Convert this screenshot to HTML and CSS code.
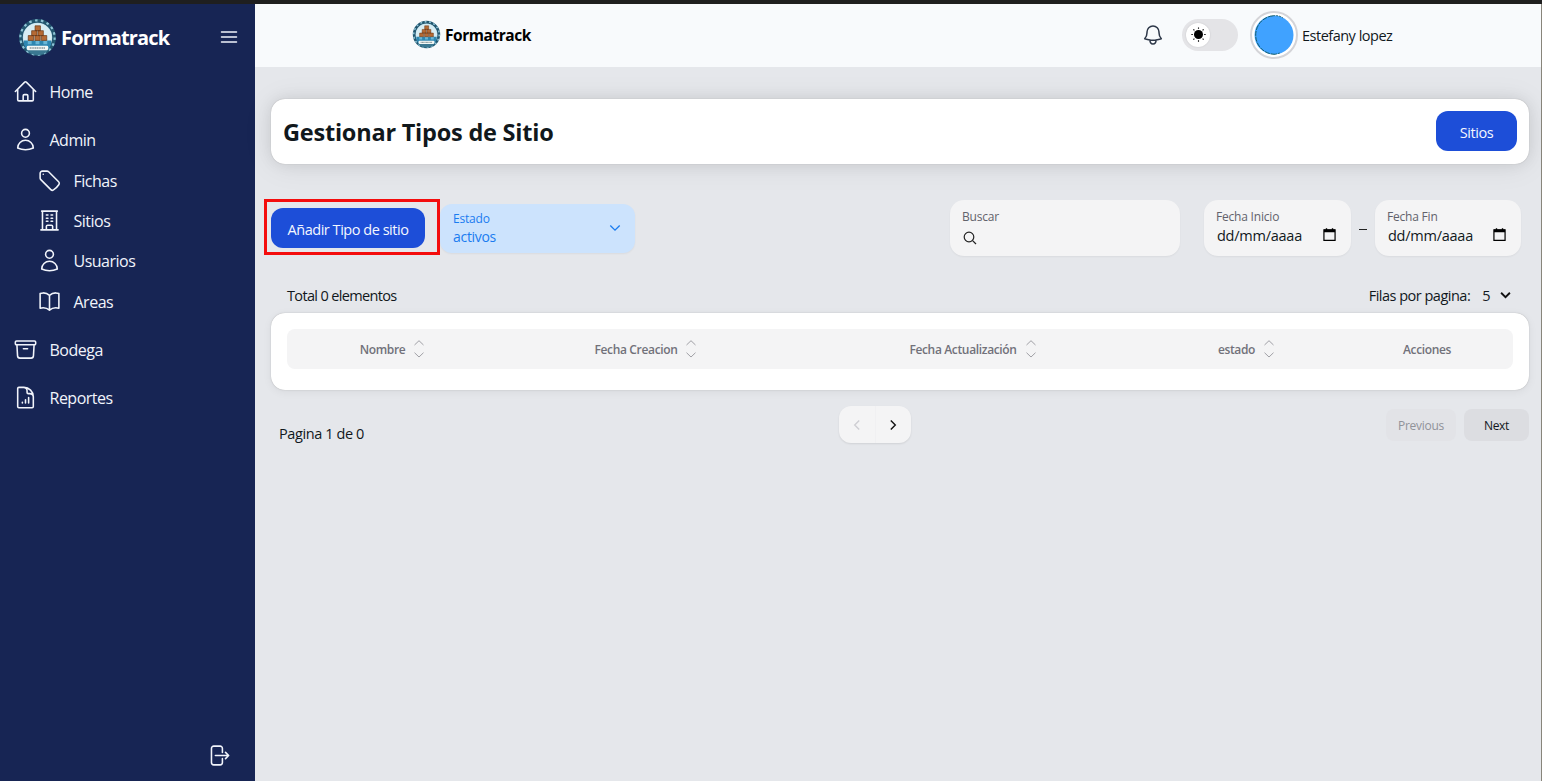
FILE: index.html
```html
<!DOCTYPE html>
<html lang="es">
<head>
<meta charset="utf-8">
<title>Formatrack</title>
<link rel="stylesheet" href="styles.css">
</head>
<body>
<svg class="defs" width="0" height="0">
  <symbol id="logo" viewBox="0 0 40 40">
    <circle cx="20" cy="20" r="18" fill="#b9dce9"/>
    <circle cx="20" cy="20" r="17" fill="none" stroke="#23566f" stroke-width="3.8"/>
    <circle cx="20" cy="20" r="17.600" fill="none" stroke="#8fc3d6" stroke-width="2.200" stroke-dasharray="2.600 3.540"/>
    <circle cx="20" cy="20" r="14.600" fill="#d8edf4"/>
    <path d="M6 23h28v4a14.600 14.600 0 0 1-28 0z" fill="#2d86b0"/>
    <path d="M10 22h4v5h-4zM18 22h4v5h-4zM26 22h4v5h-4z" fill="#69b6d6"/>
    <g fill="#b56a34" stroke="#693614" stroke-width=".7">
      <path d="M17.500 8h5.500v5h-5.500zM14 13h5.500v5H14zM20.500 13H26v5h-5.500zM10.500 18H16v5h-5.500zM17.300 18h5.500v5h-5.500zM24 18h5.500v5H24z"/>
    </g>
    <path d="M8 32a15 15 0 0 0 24 0z" fill="#3b7891"/>
    <rect x="9" y="28.500" width="22" height="4.500" rx="1.500" fill="#f3f8f6"/>
    <path d="M12 30.800h16" stroke="#53646a" stroke-width="1.100" stroke-dasharray="1.300 .5"/>
  </symbol>
  <symbol id="sort" viewBox="0 0 12 20">
    <path d="m1.500 6 4.500-4.300L10.500 6M1.500 13.700 6 18l4.500-4.300" fill="none" stroke="currentColor"/>
  </symbol>
  <symbol id="calendar" viewBox="0 0 14 14">
    <path d="M1 2h12v11.300H1z" fill="none" stroke="#000" stroke-width="1.300"/>
    <path d="M1 1.600h12v3H1zM3 .3h1.500v2H3zM9.500.3H11v2H9.500z"/>
  </symbol>
</svg>
<div class="window-edge"></div>
<div class="app">
  <aside class="sidebar">
    <div class="brand">
      <svg class="brand-logo"><use href="#logo"/></svg>
      <span class="brand-name">Formatrack</span>
      <svg class="menu" viewBox="0 0 24 24"><path d="M3.750 6.500h16.500M3.750 12h16.500m-16.500 5.500h16.500"/></svg>
    </div>
    <nav class="nav">
      <a class="item"><svg viewBox="0 0 24 24"><path d="m2.250 12 8.954-8.955c.44-.439 1.152-.439 1.591 0L21.750 12M4.500 9.750v10.125c0 .621.504 1.125 1.125 1.125H9.750v-4.875c0-.621.504-1.125 1.125-1.125h2.250c.621 0 1.125.504 1.125 1.125V21h4.125c.621 0 1.125-.504 1.125-1.125V9.750M8.250 21h8.250"/></svg><span>Home</span></a>
      <a class="item"><svg viewBox="0 0 24 24"><path d="M15.750 6a3.750 3.750 0 1 1-7.500 0 3.750 3.750 0 0 1 7.500 0ZM4.501 20.118a7.500 7.500 0 0 1 14.998 0A17.933 17.933 0 0 1 12 21.750c-2.676 0-5.216-.584-7.499-1.632Z"/></svg><span>Admin</span></a>
      <div class="subnav">
        <a class="item"><svg viewBox="0 0 24 24"><path d="M9.568 3H5.250A2.250 2.250 0 0 0 3 5.250v4.318c0 .597.237 1.170.659 1.591l9.581 9.581c.699.699 1.780.872 2.607.33a18.095 18.095 0 0 0 5.223-5.223c.542-.827.369-1.908-.33-2.607L11.160 3.660A2.250 2.250 0 0 0 9.568 3ZM6 6h.008v.008H6V6Z"/></svg><span>Fichas</span></a>
        <a class="item"><svg viewBox="0 0 24 24"><path d="M3.750 21h16.500M4.500 3h15M5.250 3v18m13.500-18v18M9 6.750h1.500m-1.500 3h1.500m-1.500 3h1.500m3-6H15m-1.500 3H15m-1.500 3H15M9 21v-3.375c0-.621.504-1.125 1.125-1.125h3.750c.621 0 1.125.504 1.125 1.125V21"/></svg><span>Sitios</span></a>
        <a class="item"><svg viewBox="0 0 24 24"><path d="M15.750 6a3.750 3.750 0 1 1-7.500 0 3.750 3.750 0 0 1 7.500 0ZM4.501 20.118a7.500 7.500 0 0 1 14.998 0A17.933 17.933 0 0 1 12 21.750c-2.676 0-5.216-.584-7.499-1.632Z"/></svg><span>Usuarios</span></a>
        <a class="item"><svg viewBox="0 0 24 24"><path d="M12 6.042A8.967 8.967 0 0 0 6 3.750c-1.052 0-2.062.18-3 .512v14.250A8.987 8.987 0 0 1 6 18c2.305 0 4.408.867 6 2.292m0-14.250a8.966 8.966 0 0 1 6-2.292c1.052 0 2.062.18 3 .512v14.250A8.987 8.987 0 0 0 18 18a8.967 8.967 0 0 0-6 2.292m0-14.250v14.250"/></svg><span>Areas</span></a>
      </div>
      <a class="item"><svg viewBox="0 0 24 24"><path d="m20.250 7.500-.625 10.632a2.250 2.250 0 0 1-2.247 2.118H6.622a2.250 2.250 0 0 1-2.247-2.118L3.750 7.500M10 11.250h4M3.375 7.500h17.250c.621 0 1.125-.504 1.125-1.125v-1.500c0-.621-.504-1.125-1.125-1.125H3.375c-.621 0-1.125.504-1.125 1.125v1.500c0 .621.504 1.125 1.125 1.125Z"/></svg><span>Bodega</span></a>
      <a class="item"><svg viewBox="0 0 24 24"><path d="M19.500 14.250v-2.625a3.375 3.375 0 0 0-3.375-3.375h-1.500A1.125 1.125 0 0 1 13.500 7.125v-1.500a3.375 3.375 0 0 0-3.375-3.375H8.250M9 16.500v.75m3-3v3M15 12v5.250m-4.500-15H5.625c-.621 0-1.125.504-1.125 1.125v17.250c0 .621.504 1.125 1.125 1.125h12.750c.621 0 1.125-.504 1.125-1.125V11.250a9 9 0 0 0-9-9Z"/></svg><span>Reportes</span></a>
    </nav>
    <svg class="logout" viewBox="0 0 24 24"><path d="M15.750 9V5.250A2.250 2.250 0 0 0 13.500 3h-6a2.250 2.250 0 0 0-2.250 2.250v13.500A2.250 2.250 0 0 0 7.500 21h6a2.250 2.250 0 0 0 2.250-2.250V15m3 0 3-3m0 0-3-3m3 3H9"/></svg>
  </aside>
  <div class="content">
    <header class="topbar">
      <svg class="top-logo"><use href="#logo"/></svg>
      <span class="top-name">Formatrack</span>
      <svg class="bell" viewBox="0 0 24 24"><path d="M14.857 17.082a23.848 23.848 0 0 0 5.454-1.310A8.967 8.967 0 0 1 18 9.750V9A6 6 0 0 0 6 9v.75a8.967 8.967 0 0 1-2.312 6.022c1.733.64 3.560 1.085 5.455 1.310m5.714 0a24.255 24.255 0 0 1-5.714 0m5.714 0a3 3 0 1 1-5.714 0"/></svg>
      <div class="switch"><div class="thumb">
        <svg class="sun" viewBox="0 0 16 16"><circle cx="8" cy="8" r="4.800"/><path d="M8 .4v1.500M8 14.100v1.500M.4 8h1.500M14.100 8h1.500M2.600 2.600l1 1M12.400 12.400l1 1M2.600 13.400l1-1M12.400 3.600l1-1" stroke="#000" stroke-width="1.200"/></svg>
      </div></div>
      <div class="avatar"><svg viewBox="0 0 40 40"><circle cx="20" cy="20" r="19.500" fill="#40a2ff"/><path d="M19 .8A19.300 19.300 0 0 0 21 39.300" fill="none" stroke="#155" stroke-width=".9" stroke-dasharray="5 1"/><path d="M19 .8Q25 0 29 3M21 39.300l5-1.300" fill="none" stroke="#155" stroke-width=".8" stroke-dasharray="2 1"/></svg></div>
      <span class="user-name">Estefany lopez</span>
    </header>
    <main class="main">
      <section class="title-card">
        <h1 class="title">Gestionar Tipos de Sitio</h1>
        <button class="btn btn-sites">Sitios</button>
      </section>
      <section class="filters">
        <div class="highlight"><button class="btn btn-add">Añadir Tipo de sitio</button></div>
        <div class="select">
          <div><div class="select-label">Estado</div><div class="select-value">activos</div></div>
          <svg class="chevron" viewBox="0 0 12 8"><path d="m1.300 1.500 4.700 4.700 4.700-4.700"/></svg>
        </div>
        <div class="field search">
          <div class="label">Buscar</div>
          <svg class="lens" viewBox="0 0 14 14"><circle cx="6" cy="6" r="4.800"/><path d="m9.600 9.600 3.400 3.400"/></svg>
        </div>
        <div class="field date">
          <div class="label">Fecha Inicio</div>
          <div class="date-row"><span class="date-value">dd/mm/aaaa</span><svg class="calendar"><use href="#calendar"/></svg></div>
        </div>
        <span class="dash"></span>
        <div class="field date date-end">
          <div class="label">Fecha Fin</div>
          <div class="date-row"><span class="date-value">dd/mm/aaaa</span><svg class="calendar"><use href="#calendar"/></svg></div>
        </div>
      </section>
      <div class="summary">
        <span class="total">Total 0 elementos</span>
        <span class="rows">Filas por pagina:</span>
        <span class="rows-value">5</span>
        <svg class="rows-chevron" viewBox="0 0 10 8"><path d="m1 1.500 4 4 4-4"/></svg>
      </div>
      <section class="table-card">
        <div class="thead">
          <div class="th"><span>Nombre</span><svg class="sort"><use href="#sort"/></svg></div>
          <div class="th"><span>Fecha Creacion</span><svg class="sort"><use href="#sort"/></svg></div>
          <div class="th"><span>Fecha Actualización</span><svg class="sort"><use href="#sort"/></svg></div>
          <div class="th"><span>estado</span><svg class="sort"><use href="#sort"/></svg></div>
          <div class="th"><span>Acciones</span></div>
        </div>
      </section>
      <footer class="pager">
        <span class="page-info">Pagina 1 de 0</span>
        <div class="arrows">
          <div class="arrow off"><svg viewBox="0 0 8 12"><path d="M6.200 1.500 1.700 6l4.500 4.500"/></svg></div>
          <div class="arrow"><svg viewBox="0 0 8 12"><path d="M1.800 1.500 6.300 6l-4.500 4.500"/></svg></div>
        </div>
        <div class="steps">
          <button class="step step-prev">Previous</button>
          <button class="step step-next">Next</button>
        </div>
      </footer>
    </main>
  </div>
</div>
</body>
</html>
```
FILE: styles.css
```css
* { box-sizing: border-box; }
body {
  margin: 0;
  height: 781px;
  overflow: hidden;
  display: flex;
  flex-direction: column;
  background: #e5e7eb;
  color: #11181c;
  font-family: "Open Sans", "Noto Sans", sans-serif;
  font-size: 14.5px;
}
span, h1, button, .label, .select-label, .select-value { white-space: nowrap; }
svg { display: block; flex: none; }
button { border: 0; padding: 0; font: inherit; }
.defs { position: absolute; }
.window-edge { height: 4px; flex: none; background: #1f1f1f; }
.app { flex: 1; display: flex; min-height: 0; border-right: 1px solid #88857b; }

.sidebar {
  width: 255px;
  flex: none;
  display: flex;
  flex-direction: column;
  background: #172554;
  color: #f1f4fb;
}
.brand { height: 67px; display: flex; align-items: center; padding: 0 15px 1px 18px; }
.brand-logo { width: 39px; height: 39px; }
.brand-name { margin-left: 4px; padding-top: 1px; font-size: 20px; font-weight: 700; letter-spacing: -.85px; color: #fff; }
.menu { width: 22px; height: 22px; margin-left: auto; }
.menu path, .item path, .logout path {
  fill: none;
  stroke: currentColor;
  stroke-width: 1.5;
  stroke-linecap: round;
  stroke-linejoin: round;
}
.nav { display: flex; flex-direction: column; gap: 8.2px; }
.item { height: 40.3px; display: flex; align-items: center; gap: 11.5px; padding-left: 13px; font-size: 16px; letter-spacing: -.5px; }
.item span { padding-top: 1px; }
.item svg { width: 25px; height: 25px; }
.subnav { margin-top: -8px; padding-left: 24px; }
.logout { width: 25px; height: 25px; margin: auto 0 13px 206px; }

.content { flex: 1; min-width: 0; display: flex; flex-direction: column; }
.topbar { height: 63px; flex: none; display: flex; align-items: center; padding: 0 0 2px 157px; background: #f8fafc; }
.top-logo { width: 29px; height: 29px; }
.top-name { width: 100px; margin-left: 4px; font-size: 15.5px; font-weight: 700; letter-spacing: -.45px; color: #000; }
.bell { width: 24px; height: 24px; margin-left: 596px; }
.bell path { fill: none; stroke: #2d3748; stroke-width: 1.5; stroke-linecap: round; stroke-linejoin: round; }
.switch { width: 56px; height: 32px; margin-left: 17px; padding: 4px; border-radius: 16px; background: #e4e4e7; }
.thumb { width: 24px; height: 24px; border-radius: 50%; background: #fff; display: grid; place-items: center; box-shadow: 0 0 2px #0002; }
.sun { width: 15px; height: 15px; }
.avatar { width: 48px; height: 48px; margin-left: 12px; padding: 2px; border: 2px solid #d4d4d8; border-radius: 50%; background: #fff; }
.avatar svg { width: 40px; height: 40px; }
.user-name { margin-left: 4px; padding-top: 2px; letter-spacing: -.5px; }

.main { padding: 32px 12px 0 16px; }
.title-card {
  height: 65px;
  display: flex;
  align-items: center;
  justify-content: space-between;
  padding: 0 12px 1px;
  border-radius: 14px;
  background: #fff;
  box-shadow: 0 0 15px #00000014, 0 2px 30px #00000014, 0 0 1px #0000004d;
}
.title { margin: 0; padding-top: 1px; font-size: 23.5px; font-weight: 700; letter-spacing: -.22px; }
.btn { height: 40px; padding-top: 2px; border-radius: 12px; background: #1d4ed8; color: #f4f7ff; letter-spacing: -.47px; }
.btn-sites { width: 81px; }
.filters { display: flex; align-items: flex-start; margin-top: 35px; }
.highlight { width: 176px; height: 56px; margin: 0 0 0 -7px; padding: 6px 4px; border: 3px solid #f40d0d; }
.btn-add { width: 154px; }
.select {
  width: 195px;
  height: 49px;
  display: flex;
  justify-content: space-between;
  align-items: center;
  margin-top: 5px;
  padding: 0 14px 1px 13px;
  border-radius: 12px;
  background: #cce3fd;
  color: #1a7cf0;
  line-height: 18px;
  box-shadow: 0 1px 2px #0000000d;
}
.select-label { font-size: 12px; letter-spacing: -.2px; }
.select-value { font-size: 14px; letter-spacing: -.3px; }
.chevron { width: 12px; height: 8px; fill: none; stroke: currentColor; stroke-width: 1.3; }
.field { height: 56px; margin-top: 1px; padding: 8px 12px; border-radius: 14px; background: #f4f4f5; box-shadow: 0 1px 2px #0000000d; }
.label { font-size: 12px; line-height: 17px; letter-spacing: -.2px; color: #62626b; }
.search { width: 230px; margin-left: 315px; }
.lens { width: 14px; height: 14px; margin: 6px 0 0 1px; fill: none; stroke: #222; stroke-width: 1.2; }
.date { width: 147px; }
.date-end { width: 146px; }
.search + .date { margin-left: 24px; }
.date-row { display: flex; justify-content: space-between; align-items: center; height: 21px; padding: 0 3px 0 1px; }
.date-value { letter-spacing: -.25px; }
.calendar { width: 13px; height: 13px; margin-top: -2px; }
.dash { width: 8px; height: 1px; margin: 30px 8px 0; background: #222; }
.summary { display: flex; align-items: center; height: 22px; margin-top: 28px; padding: 0 18px 0 16px; letter-spacing: -.5px; }
.total { letter-spacing: -.65px; }
.rows { margin-left: auto; }
.rows-value { margin: 0 10px 0 12px; }
.rows-chevron { width: 11px; height: 9px; fill: none; stroke: #111; stroke-width: 1.7; }
.table-card {
  height: 77px;
  margin-top: 7px;
  padding: 16px;
  border-radius: 14px;
  background: #fff;
  box-shadow: 0 0 5px #00000005, 0 2px 10px #0000000f, 0 0 1px #0000004d;
}
.thead {
  height: 40px;
  display: grid;
  grid-template-columns: 211px 296px 358px 189px 1fr;
  align-items: center;
  border-radius: 8px;
  background: #f4f4f5;
  color: #71717a;
  font-size: 12px;
  font-weight: 600;
  letter-spacing: -.35px;
}
.th { display: flex; justify-content: center; align-items: center; gap: 8px; }
.sort { width: 12px; height: 20px; color: #a0a0a6; }
.pager { display: grid; grid-template-columns: 568px 72px 1fr; align-items: start; margin-top: 16px; }
.page-info { padding: 18px 0 0 8px; line-height: 20px; letter-spacing: -.4px; }
.arrows { display: flex; height: 37px; border-radius: 12px; background: #f4f4f5; box-shadow: 0 1px 2px #00000018; }
.arrow { flex: 1; display: grid; place-items: center; }
.arrow + .arrow { border-left: 1px solid #f0f0f2; }
.arrow svg { width: 8px; height: 12px; fill: none; stroke: #111; stroke-width: 1.4; }
.arrow.off svg { stroke: #ceced3; }
.steps { display: flex; justify-content: flex-end; gap: 8px; margin-top: 3px; }
.step { height: 32px; border-radius: 8px; background: #dcdde1; font-size: 12px; letter-spacing: -.3px; }
.step-prev { width: 70px; background: #e2e3e7; color: #909299; }
.step-next { width: 65px; color: #11181c; }
```
